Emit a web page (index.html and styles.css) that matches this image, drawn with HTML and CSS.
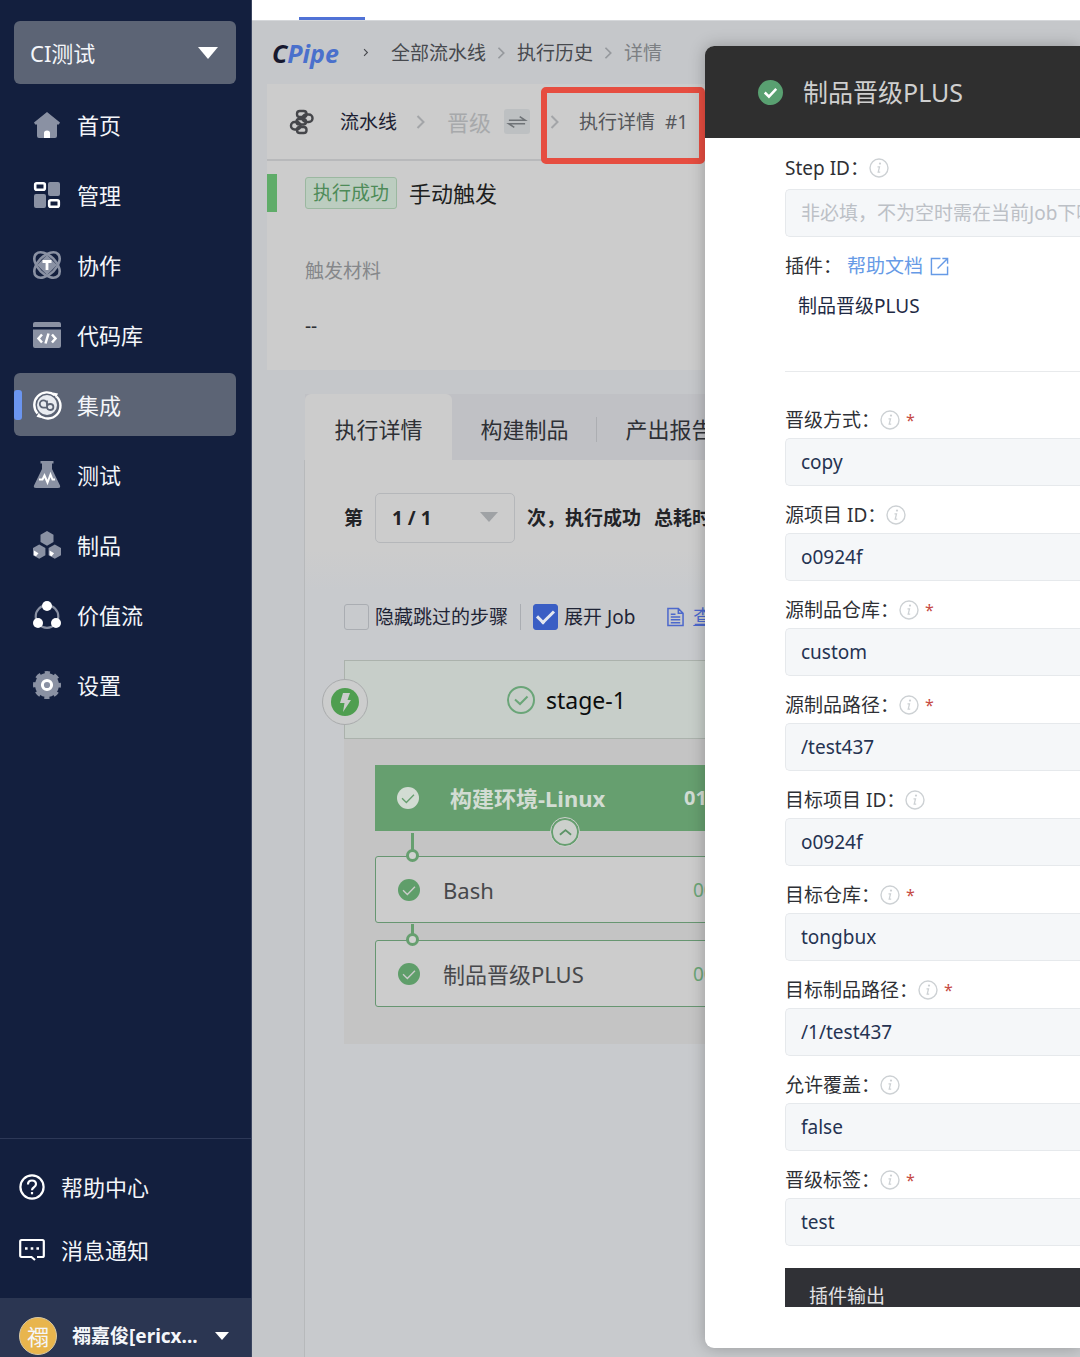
FILE: index.html
```html
<!DOCTYPE html>
<html lang="zh-CN">
<head>
  <meta charset="utf-8">
  <meta name="viewport" content="width=device-width">
  <title>CPipe 执行详情</title>
  <link rel="stylesheet" href="styles.css">
</head>
<body>
  <svg class="sprite" aria-hidden="true">
    <symbol id="icon-info" viewBox="0 0 20 20">
      <circle cx="10" cy="10" r="9" fill="none" stroke="currentColor" stroke-width="1.4"/>
      <circle cx="11" cy="5.6" r="1.1" fill="currentColor"/>
      <path d="M8.5 8.8h2l-1.3 5.4h2" fill="none" stroke="currentColor" stroke-width="1.3"/>
    </symbol>
    <symbol id="icon-done" viewBox="0 0 24 24">
      <circle cx="12" cy="12" r="12" fill="currentColor"/>
      <path d="M5.5 12.3l4.7 4.6 8.3-8.4" fill="none" stroke="var(--tick)" stroke-width="1.5"/>
    </symbol>
    <symbol id="icon-arrow" viewBox="0 0 10 16">
      <path d="M1.5 2l6 6-6 6" fill="none" stroke="currentColor" stroke-width="2"/>
    </symbol>
  </svg>

  <div class="app">
    <aside class="sidebar">
      <div class="project">
        <select class="project-select" aria-label="项目">
          <option>CI测试</option>
        </select>
      </div>

      <nav class="menu">
        <a class="menu-item" href="#">
          <svg class="menu-icon" viewBox="0 0 28 28"><path d="M14 1L1 11.5l1.2 2H4V25q0 2 2 2h16q2 0 2-2V13.500h1.800l1.200-2z" fill="#8a91a3"/><path d="M11 27v-5q0-2.500 3-2.500t3 2.500v5z" fill="#fff"/></svg>
          首页
        </a>
        <a class="menu-item" href="#">
          <svg class="menu-icon" viewBox="0 0 28 28"><rect x="15" y="1" width="12" height="14" rx="2" fill="#8a91a3"/><rect x="1" y="13" width="12" height="14" rx="2" fill="#8a91a3"/><rect x="2.200" y="2.200" width="9.600" height="6.600" rx="1.500" fill="none" stroke="#fff" stroke-width="2.600"/><rect x="16.200" y="19.200" width="9.600" height="6.600" rx="1.500" fill="none" stroke="#fff" stroke-width="2.600"/></svg>
          管理
        </a>
        <a class="menu-item" href="#">
          <svg class="menu-icon" viewBox="0 0 28 28"><g fill="none" stroke="#8a91a3" stroke-width="2.600"><ellipse cx="14" cy="14" rx="15.500" ry="9" transform="rotate(45 14 14)"/><ellipse cx="14" cy="14" rx="15.500" ry="9" transform="rotate(-45 14 14)"/></g><path d="M14 4l10 10-10 10L4 14z" fill="#8a91a3"/><path d="M9.500 10.500h9M14 10.500v8.500" stroke="#fff" stroke-width="2.800"/></svg>
          协作
        </a>
        <a class="menu-item" href="#">
          <svg class="menu-icon" viewBox="0 0 28 28"><path d="M0 3q0-2 2-2h24q2 0 2 2v3H0zM0 8.500h28V25q0 2-2 2H2q-2 0-2-2z" fill="#8a91a3"/><path d="M9 13.500l-3.500 4 3.500 4M19 13.500l3.500 4-3.500 4M15.500 12.500l-3 10" fill="none" stroke="#fff" stroke-width="2.500"/></svg>
          代码库
        </a>
        <a class="menu-item active" href="#">
          <svg class="menu-icon" viewBox="0 0 28 28"><g fill="none" stroke="#fff"><path d="M4.500 22.500A12.700 12.700 0 0 1 22 4.200M23.500 5.500A12.700 12.700 0 0 1 6 24" stroke-width="2.400"/></g><circle cx="14" cy="14" r="10" fill="#e9ecf1"/><path d="M14 9.500v6q0 3.500 3.200 3.500t3.200-3-3.200-3-3.200 3M14 9.500v6.500M14 13a3.600 3.600 0 1 0-3.600 3.600h3.600" fill="none" stroke="#5c6475" stroke-width="1.800"/><path d="M20 1.500l5 1-2 4.500zM8 27l-4.500-1.200L6 21.500z" fill="#fff"/></svg>
          集成
        </a>
        <a class="menu-item" href="#">
          <svg class="menu-icon" viewBox="0 0 28 28"><path d="M7.500 0h13v2.500H19V8l8 16.500q.8 2.500-2 2.500H3q-2.800 0-2-2.500L9 8V2.500H7.500z" fill="#8a91a3"/><path d="M6 18.500h3.500l2-4 3 7 3-8 2 5H22" fill="none" stroke="#fff" stroke-width="2"/></svg>
          测试
        </a>
        <a class="menu-item" href="#">
          <svg class="menu-icon" viewBox="0 0 28 28"><path d="M14 0l6.500 3.700v7.400L14 14.800l-6.500-3.700V3.700zM6.200 13.500l6.200 3.500v7.200l-6.200 3.500L0 24.200V17zM21.800 13.500L28 17v7.200l-6.200 3.500-6.200-3.500V17z" fill="#8a91a3"/><path d="M1 19.500l4.500 2.800L3 25.300l-2-1.100zM16.600 19.500l4.500 2.800-2.500 3-2-1.100z" fill="#fff"/></svg>
          制品
        </a>
        <a class="menu-item" href="#">
          <svg class="menu-icon" viewBox="0 0 28 28"><circle cx="14" cy="15.500" r="11.300" fill="none" stroke="#8a91a3" stroke-width="2.200"/><circle cx="14" cy="5" r="5" fill="#fff"/><circle cx="5" cy="22" r="5" fill="#fff"/><circle cx="23" cy="22" r="5" fill="#fff"/></svg>
          价值流
        </a>
        <a class="menu-item" href="#">
          <svg class="menu-icon" viewBox="0 0 28 28"><circle cx="14" cy="14" r="12" fill="#8a91a3"/><circle cx="14" cy="14" r="12" fill="none" stroke="#8a91a3" stroke-width="4" stroke-dasharray="5 4.420" stroke-dashoffset="2.500"/><circle cx="14" cy="14" r="4.600" fill="none" stroke="#fff" stroke-width="3"/></svg>
          设置
        </a>
      </nav>

      <div class="support">
        <a class="support-item" href="#">
          <svg class="support-icon" viewBox="0 0 26 26" fill="none" stroke="#fff" stroke-width="2.200"><circle cx="13" cy="13" r="11.600"/><path d="M9 10.500q0-4 4-4t4 3.600q0 2-2 3.200t-2 3"/><path d="M13 18v2.300"/></svg>
          帮助中心
        </a>
        <a class="support-item" href="#">
          <svg class="support-icon" viewBox="0 0 26 26" fill="none" stroke="#fff" stroke-width="2.200"><path d="M16 23l-3.500-3H2.500q-1.300 0-1.300-1.500V4.500Q1.200 3 2.500 3h21q1.300 0 1.300 1.500v14q0 1.500-1.300 1.500H18"/><path d="M6 11.500h2.600M11.700 11.500h2.600M17.400 11.500H20" stroke-width="2.600"/></svg>
          消息通知
        </a>
      </div>

      <button class="user" type="button">
        <span class="avatar">禤</span>
        <span class="user-name">禤嘉俊[ericx...</span>
        <span class="caret"></span>
      </button>
    </aside>

    <main class="main">
      <div class="topbar"><span class="topbar-mark"></span></div>

      <nav class="crumbs">
        <a class="logo" href="#"><span class="logo-dark">C</span>Pipe</a>
        <svg class="crumb-first" viewBox="0 0 10 16"><use href="#icon-arrow"/></svg>
        <a href="#">全部流水线</a>
        <svg class="crumb-arrow" viewBox="0 0 10 16"><use href="#icon-arrow"/></svg>
        <a href="#">执行历史</a>
        <svg class="crumb-arrow" viewBox="0 0 10 16"><use href="#icon-arrow"/></svg>
        <span class="crumb-current">详情</span>
      </nav>

      <section class="summary">
        <div class="path">
          <svg class="path-icon" viewBox="0 0 26 26" fill="none" stroke="#45464a" stroke-width="2.400"><rect x="8" y="2" width="9.500" height="6" rx="2.800"/><rect x="13.500" y="5.500" width="10" height="7.500" rx="3.600"/><rect x="7.500" y="10" width="9.500" height="5.500" rx="2.700"/><rect x="2" y="13" width="9.500" height="7.500" rx="3.600"/><rect x="8" y="18" width="9.500" height="6" rx="2.800"/></svg>
          <a class="path-main" href="#">流水线</a>
          <svg class="path-arrow" viewBox="0 0 10 16"><use href="#icon-arrow"/></svg>
          <span class="path-name">晋级</span>
          <button class="swap" type="button" aria-label="切换">
            <svg viewBox="0 0 20 14" fill="none" stroke="#6f7377" stroke-width="1.800"><path d="M1 5h18l-6-4M19 9H1l6 4"/></svg>
          </button>
          <span class="path-target">
            <svg class="path-arrow" viewBox="0 0 10 16"><use href="#icon-arrow"/></svg>
            <span>执行详情&nbsp; #1</span>
          </span>
        </div>
        <div class="status">
          <span class="status-tag">执行成功</span>
          <span class="status-title">手动触发</span>
        </div>
        <div class="material">
          <div class="material-label">触发材料</div>
          <div>--</div>
        </div>
      </section>

      <section class="detail">
        <div class="tabs">
          <button class="tab current" type="button">执行详情</button>
          <button class="tab split" type="button">构建制品</button>
          <button class="tab" type="button">产出报告</button>
        </div>

        <div class="panel">
          <div class="run">
            <label for="run-no">第</label>
            <div class="run-box">
              <select id="run-no" class="run-select"><option>1 / 1</option></select>
            </div>
            <span>次，执行成功</span>
            <span class="run-time">总耗时</span>
          </div>

          <div class="options">
            <label class="option"><input class="check" type="checkbox">隐藏跳过的步骤</label>
            <label class="option second"><input class="check" type="checkbox" checked>展开 Job</label>
            <a class="log" href="#">
              <svg viewBox="0 0 18 20" fill="none" stroke="currentColor" stroke-width="1.600"><path d="M1 1h11l5 5v13H1zM12 1v5h5M4 7h5M4 10h10M4 13h10M4 16h10"/></svg>
              <span>查看日志</span>
            </a>
          </div>

          <div class="stage">
            <div class="stage-head">
              <span class="trigger">
                <svg viewBox="0 0 28 28"><circle cx="14" cy="14" r="14" fill="#4f9e50"/><path d="M12 5h7l-2.500 7H20l-8 12 1.500-9H9z" fill="#cccdcd"/></svg>
              </span>
              <svg class="stage-icon" viewBox="0 0 28 28" fill="none" stroke="#6aa578" stroke-width="2"><circle cx="14" cy="14" r="13"/><path d="M8 13.500l5 4.500 7.500-7.500"/></svg>
              <span>stage-1</span>
            </div>
            <div class="stage-body">
              <div class="job">
                <svg class="job-icon" viewBox="0 0 24 24"><use href="#icon-done"/></svg>
                <span class="job-name">构建环境-Linux</span>
                <span>01:02</span>
                <button class="fold" type="button" aria-label="收起">
                  <svg viewBox="0 0 14 8"><path d="M1 7l6-5 6 5" fill="none" stroke="#5c9467" stroke-width="2"/></svg>
                </button>
              </div>
              <div class="step first">
                <svg class="step-icon" viewBox="0 0 24 24"><use href="#icon-done"/></svg>
                <span class="step-name">Bash</span>
                <span class="step-time">00:01</span>
              </div>
              <div class="step">
                <svg class="step-icon" viewBox="0 0 24 24"><use href="#icon-done"/></svg>
                <span class="step-name">制品晋级PLUS</span>
                <span class="step-time">00:01</span>
              </div>
            </div>
          </div>
        </div>
      </section>
    </main>

    <section class="drawer">
      <header class="drawer-head">
        <svg class="drawer-icon" viewBox="0 0 24 24"><circle cx="12" cy="12" r="12" fill="#59a071"/><path d="M6.500 12l4 4 7-7.500" fill="none" stroke="#fff" stroke-width="2.400"/></svg>
        制品晋级PLUS
      </header>
      <div class="drawer-body">
        <div class="field step-field">
          <div class="field-head">
            <label for="step-id">Step ID：</label>
            <svg class="info"><use href="#icon-info"/></svg>
          </div>
          <input id="step-id" type="text" placeholder="非必填，不为空时需在当前Job下唯一">
        </div>

        <div class="plugin">
          <div class="plugin-head">
            <span>插件：</span>
            <a href="#">帮助文档
              <svg viewBox="0 0 20 20" fill="none" stroke="currentColor" stroke-width="1.500"><path d="M11 1.500H1.500v17h17V10M13 1.500h5.500V7M18.500 1.500L8 12"/></svg>
            </a>
          </div>
          <div class="plugin-name">制品晋级PLUS</div>
        </div>

        <div class="field">
          <div class="field-head">
            <label for="mode">晋级方式：</label>
            <svg class="info"><use href="#icon-info"/></svg>
            <span class="required">*</span>
          </div>
          <input id="mode" type="text" value="copy">
        </div>
        <div class="field">
          <div class="field-head">
            <label for="src-id">源项目 ID：</label>
            <svg class="info"><use href="#icon-info"/></svg>
          </div>
          <input id="src-id" type="text" value="o0924f">
        </div>
        <div class="field">
          <div class="field-head">
            <label for="src-repo">源制品仓库：</label>
            <svg class="info"><use href="#icon-info"/></svg>
            <span class="required">*</span>
          </div>
          <input id="src-repo" type="text" value="custom">
        </div>
        <div class="field">
          <div class="field-head">
            <label for="src-path">源制品路径：</label>
            <svg class="info"><use href="#icon-info"/></svg>
            <span class="required">*</span>
          </div>
          <input id="src-path" type="text" value="/test437">
        </div>
        <div class="field">
          <div class="field-head">
            <label for="dst-id">目标项目 ID：</label>
            <svg class="info"><use href="#icon-info"/></svg>
          </div>
          <input id="dst-id" type="text" value="o0924f">
        </div>
        <div class="field">
          <div class="field-head">
            <label for="dst-repo">目标仓库：</label>
            <svg class="info"><use href="#icon-info"/></svg>
            <span class="required">*</span>
          </div>
          <input id="dst-repo" type="text" value="tongbux">
        </div>
        <div class="field">
          <div class="field-head">
            <label for="dst-path">目标制品路径：</label>
            <svg class="info"><use href="#icon-info"/></svg>
            <span class="required">*</span>
          </div>
          <input id="dst-path" type="text" value="/1/test437">
        </div>
        <div class="field">
          <div class="field-head">
            <label for="cover">允许覆盖：</label>
            <svg class="info"><use href="#icon-info"/></svg>
          </div>
          <input id="cover" type="text" value="false">
        </div>
        <div class="field">
          <div class="field-head">
            <label for="tag">晋级标签：</label>
            <svg class="info"><use href="#icon-info"/></svg>
            <span class="required">*</span>
          </div>
          <input id="tag" type="text" value="test">
        </div>

        <div class="output">插件输出</div>
      </div>
    </section>
  </div>
</body>
</html>
```

FILE: styles.css
```css
*, *::before, *::after {
  box-sizing: border-box;
}
body {
  margin: 0;
  font-family: "Noto Sans", "Noto Sans CJK SC", sans-serif;
  font-size: 19px;
  line-height: 30px;
  color: #2e3035;
}
a {
  color: inherit;
  text-decoration: none;
}
button, select, input {
  font: inherit;
  color: inherit;
  margin: 0;
}
button {
  border: 0;
  padding: 0;
  background: none;
  cursor: pointer;
}
svg {
  flex: none;
  overflow: visible;
}
.sprite {
  position: absolute;
  width: 0;
  height: 0;
}
.app {
  display: flex;
  min-height: 100vh;
  position: relative;
  overflow: hidden;
}

/* sidebar */
.sidebar {
  width: 252px;
  flex: none;
  display: flex;
  flex-direction: column;
  background: #131f3e;
  border-right: 1px solid #3b4560;
  color: #f4f6fa;
  font-size: 22px;
}
.project {
  position: relative;
  margin: 21px 15px 9px 14px;
}
.project-select {
  display: block;
  width: 100%;
  height: 63px;
  padding: 0 16px;
  border: 0;
  border-radius: 6px;
  background: #5c6475;
  appearance: none;
}
.project::after {
  content: "";
  position: absolute;
  right: 18px;
  top: 26px;
  border: 10px solid transparent;
  border-top: 12px solid #fff;
  border-bottom: 0;
  pointer-events: none;
}
.menu {
  display: flex;
  flex-direction: column;
  gap: 7px;
  margin: 0 15px 0 14px;
}
.menu-item {
  display: flex;
  align-items: center;
  gap: 16px;
  height: 63px;
  padding-left: 19px;
  border-radius: 6px;
}
.menu-icon {
  width: 28px;
  height: 28px;
}
.menu-item.active {
  position: relative;
  background: #5c6475;
}
.menu-item.active::before {
  content: "";
  position: absolute;
  left: 0;
  top: 17px;
  width: 8px;
  height: 30px;
  border-radius: 3px;
  background: #6b95f0;
}
.support {
  margin-top: auto;
  padding: 16px 19px 17px;
  border-top: 1px solid #2d3857;
}
.support-item {
  display: flex;
  align-items: center;
  gap: 16px;
  height: 63px;
}
.support-icon {
  width: 26px;
  height: 26px;
}
.user {
  display: flex;
  align-items: center;
  padding: 19px 19px 2px;
  background: #2b3652;
}
.avatar {
  width: 38px;
  height: 38px;
  border: 1px solid #d8c9a4;
  border-radius: 50%;
  background: #e8b54d;
  line-height: 36px;
}
.user-name {
  flex: 1;
  padding-left: 15px;
  text-align: left;
  font-size: 19px;
  font-weight: bold;
}
.caret {
  margin-right: 3px;
  border: 7px solid transparent;
  border-top: 8px solid #fff;
  border-bottom: 0;
}

/* page behind the drawer */
.main {
  flex: 1;
  min-width: 0;
  display: flex;
  flex-direction: column;
  background: #c5c7ca;
}
.topbar {
  display: flex;
  align-items: flex-end;
  height: 21px;
  padding-left: 47px;
  background: #fff;
  border-bottom: 1px solid #d5d7da;
}
.topbar-mark {
  width: 66px;
  height: 3px;
  background: #5072d6;
}
.crumbs {
  display: flex;
  align-items: center;
  height: 63px;
  padding-left: 20px;
  color: #47494e;
  white-space: nowrap;
}
.logo {
  width: 70px;
  font-size: 25px;
  font-weight: bold;
  font-style: italic;
  color: #4a70cc;
}
.logo-dark {
  color: #16182e;
}
.crumb-first {
  width: 6px;
  height: 9px;
  margin: 0 22px 0 21px;
}
.crumb-arrow {
  width: 9px;
  height: 14px;
  margin: 0 11px;
  color: #96999d;
}
.crumb-current {
  color: #7c7f83;
}
.summary {
  height: 286px;
  margin-left: 15px;
  background: #ccc;
}
.path {
  display: flex;
  align-items: center;
  height: 77px;
  padding-left: 22px;
  border-bottom: 2px solid #b8b9bb;
  white-space: nowrap;
}
.path-icon {
  width: 26px;
  height: 26px;
}
.path-main {
  margin: 0 19px 0 25px;
  color: #1d1f33;
}
.path-arrow {
  width: 10px;
  height: 18px;
  color: #a3a5a8;
}
.path-name {
  margin: 0 13px 0 21px;
  font-size: 22px;
  color: #a7a9ab;
}
.swap {
  display: flex;
  align-items: center;
  justify-content: center;
  width: 26px;
  height: 25px;
  border-radius: 3px;
  background: #bdc0c2;
}
.swap svg {
  width: 18px;
  height: 14px;
}
.path-target {
  position: relative;
  display: flex;
  align-items: center;
  gap: 19px;
  margin-left: 20px;
  color: #54565a;
}
.path-target::after {
  content: "";
  position: absolute;
  left: -9px;
  right: -17px;
  top: -20px;
  bottom: -27px;
  border: 6px solid #e64d40;
  border-radius: 5px;
}
.status {
  display: flex;
  align-items: center;
  gap: 12px;
  height: 38px;
  margin-top: 13px;
  padding-left: 28px;
  border-left: 10px solid #5fac69;
}
.status-tag {
  padding: 0 7px;
  border: 1px solid #9bb8a0;
  border-radius: 3px;
  background: #bccdc0;
  color: #4d8b58;
}
.status-title {
  font-size: 22px;
  color: #1d1e20;
}
.material {
  display: flex;
  flex-direction: column;
  gap: 25px;
  padding: 44px 38px 0;
}
.material-label {
  color: #85878a;
}
.detail {
  flex: 1;
  display: flex;
  flex-direction: column;
  margin: 24px 0 0 52px;
}
.tabs {
  display: flex;
  margin-left: 1px;
  background: #c0c1c5;
}
.tab {
  width: 145px;
  height: 66px;
  font-size: 22px;
  line-height: 70px;
}
.tab.current {
  width: 147px;
  border-radius: 6px 6px 0 0;
  background: #ccc;
}
.tab.split {
  background: linear-gradient(#acaeb2, #acaeb2) right 23px / 1px 25px no-repeat;
}
.panel {
  flex: 1;
  padding: 33px 0 0 39px;
  border-left: 1px solid #b7b9bb;
  background: linear-gradient(#ccc 90px, #c8cacd 130px);
}
.run {
  display: flex;
  align-items: center;
  font-weight: bold;
  color: #222327;
}
.run-box {
  position: relative;
  width: 140px;
  margin: 0 12px;
}
.run-select {
  display: block;
  width: 100%;
  height: 50px;
  padding: 0 16px;
  border: 1px solid #b5b7ba;
  border-radius: 5px;
  background: transparent;
  appearance: none;
}
.run-box::after {
  content: "";
  position: absolute;
  right: 17px;
  top: 19px;
  border: 9px solid transparent;
  border-top: 10px solid #9fa2a5;
  border-bottom: 0;
  pointer-events: none;
}
.run-time {
  margin-left: 13px;
}
.options {
  display: flex;
  align-items: center;
  height: 50px;
  margin-top: 49px;
  color: #1f2435;
}
.option {
  display: flex;
  align-items: center;
  gap: 6px;
}
.check {
  display: grid;
  place-items: center;
  width: 25px;
  height: 26px;
  border: 1px solid #aaadb2;
  border-radius: 3px;
  appearance: none;
}
.check:checked {
  border-color: #3a5ec4;
  background: #3a5ec4;
}
.check:checked::before {
  content: "";
  width: 17px;
  height: 10px;
  margin-bottom: 5px;
  border: solid #e4e8f0;
  border-width: 0 0 3px 3px;
  rotate: -45deg;
}
.option.second {
  margin-left: 12px;
  padding-left: 12px;
  border-left: 1px solid #aaadb2;
  line-height: 26px;
}
.log {
  display: flex;
  align-items: center;
  gap: 9px;
  margin-left: 32px;
  color: #4c68cc;
}
.log span {
  text-decoration: underline;
}
.log svg {
  width: 17px;
  height: 20px;
}
.stage {
  margin-top: 18px;
  background: #c4c4c4;
}
.stage-head {
  position: relative;
  display: flex;
  align-items: center;
  gap: 11px;
  height: 79px;
  padding-left: 162px;
  border: 1px solid #abb2ac;
  background: #c7cec9;
  font-size: 23px;
  color: #0c0d0e;
}
.stage-icon {
  width: 28px;
  height: 28px;
}
.trigger {
  position: absolute;
  left: -23px;
  top: 18px;
  display: flex;
  padding: 8px;
  border: 1px solid #a9abac;
  border-radius: 50%;
  background: #cccdcd;
}
.trigger svg {
  width: 28px;
  height: 28px;
}
.stage-body {
  padding: 26px 0 37px 31px;
}
.job {
  position: relative;
  display: flex;
  align-items: center;
  gap: 31px;
  height: 66px;
  padding-left: 22px;
  background: #669f6f;
  font-size: 20px;
  font-weight: bold;
  color: #d2dcd3;
}
.job-icon {
  --tick: #669f6f;
  width: 22px;
  height: 22px;
}
.job-name {
  width: 203px;
  font-size: 22px;
}
.fold {
  position: absolute;
  left: 176px;
  bottom: -15px;
  display: flex;
  align-items: center;
  justify-content: center;
  width: 28px;
  height: 28px;
  border: 2px solid #669f6f;
  border-radius: 50%;
  background: #ccd0cc;
  outline: 1px solid #ccd0cc;
}
.fold svg {
  width: 13px;
  height: 8px;
}
.step {
  position: relative;
  display: flex;
  align-items: center;
  height: 67px;
  margin-top: 17px;
  padding-left: 22px;
  border: 1px solid #679671;
  border-radius: 3px;
  background: #ccc;
}
.step.first {
  margin-top: 25px;
}
/* connector between steps */
.step::before {
  content: "";
  position: absolute;
  left: 35px;
  top: -17px;
  width: 3px;
  height: 12px;
  background: #669f6f;
}
.step.first::before {
  top: -24px;
  height: 19px;
}
.step::after {
  content: "";
  position: absolute;
  left: 30px;
  top: -8px;
  width: 13px;
  height: 13px;
  border: 3px solid #669f6f;
  border-radius: 50%;
  background: #d0d2d0;
}
.step-icon {
  --tick: #ccc;
  width: 22px;
  height: 22px;
  color: #5f9e6a;
}
.step-name {
  width: 273px;
  padding-left: 23px;
  font-size: 22px;
  color: #47484b;
}
.step-time {
  color: #6ba577;
}

/* drawer */
.drawer {
  position: absolute;
  left: 705px;
  right: 0;
  top: 46px;
  bottom: 9px;
  display: flex;
  flex-direction: column;
  padding-bottom: 41px;
  border-radius: 9px 0 0 9px;
  overflow: hidden;
  background: #fff;
  box-shadow: 0 0 16px rgba(0, 0, 0, 0.25);
}
.drawer-head {
  display: flex;
  align-items: center;
  flex: none;
  gap: 20px;
  height: 92px;
  padding-left: 53px;
  background: #2f2f2f;
  color: #cfcfcf;
  font-size: 25px;
}
.drawer-icon {
  width: 25px;
  height: 25px;
}
.drawer-body {
  flex: 1;
  min-height: 0;
  padding: 15px 0 0 80px;
  overflow: hidden;
}
.field {
  margin-bottom: 14px;
}
.field-head {
  display: flex;
  align-items: center;
  margin-bottom: 3px;
}
.info {
  width: 20px;
  height: 20px;
  color: #cdd1d4;
}
.required {
  margin-left: 6px;
  font-size: 16px;
  line-height: 26px;
  color: #c64a44;
}
.field input {
  display: block;
  width: 100%;
  height: 48px;
  padding: 0 0 0 15px;
  border: 1px solid #e6e9ec;
  border-right: 0;
  border-radius: 5px 0 0 5px;
  background: #f5f7f9;
  color: #253352;
}
.field input::placeholder {
  color: #bcc0c6;
}
.step-field .field-head {
  margin-bottom: 6px;
}
.plugin {
  margin-bottom: 33px;
  padding-bottom: 50px;
  border-bottom: 1px solid #e8eaec;
}
.plugin-head {
  display: flex;
  align-items: center;
  gap: 5px;
}
.plugin-head a {
  display: flex;
  align-items: center;
  gap: 7px;
  color: #669ae6;
}
.plugin-head svg {
  width: 19px;
  height: 19px;
}
.plugin-name {
  margin-top: 10px;
  padding-left: 13px;
  color: #1f2a44;
}
.output {
  margin-top: 22px;
  padding: 17px 24px 0;
  line-height: 22px;
  background: #303136;
  color: #e2e2e4;
}
```
